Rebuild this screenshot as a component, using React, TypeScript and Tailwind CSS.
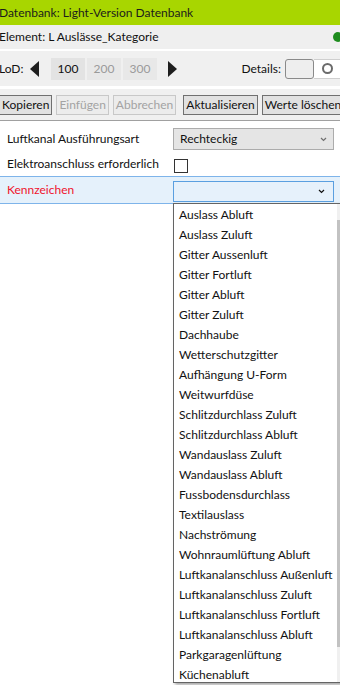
const items = [
  'Auslass Abluft',
  'Auslass Zuluft',
  'Gitter Aussenluft',
  'Gitter Fortluft',
  'Gitter Abluft',
  'Gitter Zuluft',
  'Dachhaube',
  'Wetterschutzgitter',
  'Aufhängung U-Form',
  'Weitwurfdüse',
  'Schlitzdurchlass Zuluft',
  'Schlitzdurchlass Abluft',
  'Wandauslass Zuluft',
  'Wandauslass Abluft',
  'Fussbodensdurchlass',
  'Textilauslass',
  'Nachströmung',
  'Wohnraumlüftung Abluft',
  'Luftkanalanschluss Außenluft',
  'Luftkanalanschluss Zuluft',
  'Luftkanalanschluss Fortluft',
  'Luftkanalanschluss Abluft',
  'Parkgaragenlüftung',
  'Küchenabluft',
];

const Chevron = ({ className = '' }: { className?: string }) => (
  <svg width="7" height="5" viewBox="0 0 7 5" className={className}>
    <path d="M1 1 L3.5 3.5 L6 1" fill="none" stroke="currentColor" strokeWidth="1.2" />
  </svg>
);

const App = () => {
  return (
    <div className="relative w-[340px] h-[685px] overflow-hidden bg-white text-[12px] text-[#111111] font-['Lato',sans-serif]">
      {/* Title */}
      <div className="h-[25px] bg-[#a8d600] flex items-center -ml-[1px] text-[#1c1c1c]">
        Datenbank: Light-Version Datenbank
      </div>
      <div className="h-[24px] bg-[#efefef] flex items-center justify-between -ml-[1px]">
        <span>Element: L Auslässe_Kategorie</span>
        <span className="w-[10px] h-[10px] rounded-full bg-[#1e8c1e] mr-[-3px]" />
      </div>
      <div className="h-[2px] bg-white" />

      {/* LoD row */}
      <div className="h-[35px] bg-[#f0f0f0] flex items-center">
        <span className="-ml-[1px] w-[30px]">LoD:</span>
        <svg width="9" height="16" viewBox="0 0 9 16" className="ml-[1px]">
          <path d="M9 0 L0 8 L9 16 Z" fill="#1e1e1e" />
        </svg>
        <div className="ml-[12px] flex gap-[2px]">
          <span className="w-[34px] h-[22px] bg-[#e3e3e3] flex items-center justify-center">100</span>
          <span className="w-[34px] h-[22px] bg-[#e8e8e8] text-[#9a9a9a] flex items-center justify-center">200</span>
          <span className="w-[34px] h-[22px] bg-[#e8e8e8] text-[#9a9a9a] flex items-center justify-center">300</span>
        </div>
        <svg width="9" height="16" viewBox="0 0 9 16" className="ml-[11px]">
          <path d="M0 0 L9 8 L0 16 Z" fill="#1e1e1e" />
        </svg>
        <span className="ml-auto mr-[4px]">Details:</span>
        <div className="flex items-center h-[20px]">
          <span className="w-[29px] h-[20px] rounded-[3px] border border-[#8a8a8a] bg-[#eeeeee]" />
          <span className="w-[26px] h-[20px] bg-white border-y border-[#cfcfcf] flex items-center justify-center">
            <span className="w-[11px] h-[11px] rounded-full border-[2px] border-[#6b6b6b]" />
          </span>
        </div>
      </div>
      <div className="h-[3px] bg-white" />

      {/* Buttons */}
      <div className="h-[32px] bg-[#f0f0f0] flex items-center gap-[4px] -ml-[1px] border-b border-[#a0a0a0]">
        <button className="h-[20px] px-[2px] border border-[#707070] bg-[#e1e1e1] leading-none">Kopieren</button>
        <button className="h-[20px] px-[2px] border border-[#c8c8c8] bg-[#ececec] text-[#a3a3a3] leading-none">Einfügen</button>
        <button className="h-[20px] px-[2px] border border-[#c8c8c8] bg-[#ececec] text-[#a3a3a3] leading-none">Abbrechen</button>
        <button className="ml-[3px] h-[20px] px-[2px] border border-[#707070] bg-[#e1e1e1] leading-none">Aktualisieren</button>
        <button className="h-[20px] px-[2px] border border-[#707070] bg-[#e1e1e1] leading-none whitespace-nowrap">Werte löschen</button>
      </div>

      {/* Properties */}
      <div className="pt-[6px]">
        <div className="h-[24px] flex items-center">
          <span className="w-[173px] pl-[7px]">Luftkanal Ausführungsart</span>
          <div className="w-[161px] h-[22px] bg-[#e5e5e5] border border-[#acacac] flex items-center justify-between px-[6px]">
            <span>Rechteckig</span>
            <Chevron className="text-[#707070]" />
          </div>
        </div>
        <div className="h-[25px] flex items-end pb-[3px]">
          <span className="w-[174px] pl-[7px]">Elektroanschluss erforderlich</span>
          <span className="w-[14px] h-[14px] border border-[#333333] bg-white" />
        </div>
        <div className="h-[28px] flex items-center bg-[#e5f1fb] border-y border-[#7eb4ea]">
          <span className="w-[173px] pl-[7px] text-[#f0142d]">Kennzeichen</span>
          <div className="self-end mb-[1px] w-[161px] h-[21px] bg-[#e6f1fb] border border-[#5a9fe0] flex items-center justify-end px-[8px]">
            <Chevron className="text-[#111111]" />
          </div>
        </div>
      </div>

      {/* Dropdown list */}
      <div className="absolute left-[173px] top-[203px] w-[182px] h-[480px] bg-white border border-[#646464] shadow-[2px_2px_3px_rgba(0,0,0,0.35)] flex">
        <ul className="w-[163px] pt-[1px]">
          {items.map((item) => (
            <li key={item} className="h-[20px] pl-[5px] flex items-center whitespace-nowrap">
              {item}
            </li>
          ))}
        </ul>
        <div className="w-[17px] bg-[#f0f0f0] flex flex-col pt-[16px] pb-[35px]">
          <div className="flex-1 bg-[#c2c2c2]" />
        </div>
      </div>
    </div>
  );
};

export default App;
